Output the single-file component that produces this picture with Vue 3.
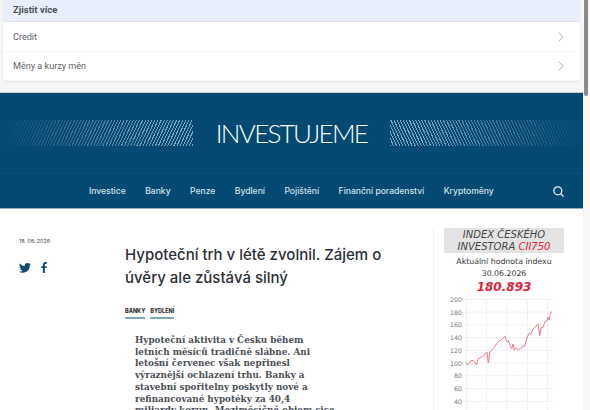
<template>
  <div class="page">
    <div class="scrollbar"><div class="thumb"></div></div>

    <section class="learn">
      <div class="card">
        <div class="card-head">Zjistit více</div>
        <a v-for="item in links" :key="item" class="card-row">
          <span>{{ item }}</span>
          <svg width="6" height="10" viewBox="0 0 6 10"><path d="M.7.7L5.200 5 .7 9.300" fill="none" stroke="#b0b4b9" stroke-width="1" /></svg>
        </a>
      </div>
    </section>

    <header class="masthead">
      <div class="brand">
        <div class="stripes stripes-left"></div>
        <div class="logo">INVESTUJEME</div>
        <div class="stripes stripes-right"></div>
      </div>
      <nav class="nav">
        <a v-for="nav in navigation" :key="nav" class="nav-item">{{ nav }}</a>
        <svg class="search" width="11" height="11" viewBox="0 0 11 11">
          <circle cx="4.800" cy="4.800" r="4" fill="none" stroke="#e4edf3" stroke-width="1.300" />
          <path d="M7.800 7.800l2.700 2.700" stroke="#e4edf3" stroke-width="1.300" />
        </svg>
      </nav>
    </header>

    <main class="content">
      <aside class="meta">
        <div class="date">18. 08. 2026</div>
        <div class="share">
          <svg width="12" height="10" viewBox="0 0 24 20"><path fill="#0d4a74" d="M24 2.400a9.800 9.800 0 0 1-2.800.8A4.900 4.900 0 0 0 23.300.5a9.800 9.800 0 0 1-3.100 1.200 4.900 4.900 0 0 0-8.400 4.500A13.900 13.900 0 0 1 1.700.9a4.900 4.900 0 0 0 1.500 6.600 4.900 4.900 0 0 1-2.200-.6v.1a4.900 4.900 0 0 0 3.900 4.800 4.900 4.900 0 0 1-2.200.1 4.900 4.900 0 0 0 4.600 3.400A9.900 9.900 0 0 1 0 17.300 13.900 13.900 0 0 0 7.500 19.500c9.100 0 14-7.500 14-14v-.6A10 10 0 0 0 24 2.400z" /></svg>
          <svg width="6" height="11" viewBox="0 0 10 20"><path fill="#0d4a74" d="M6.500 20v-9h3l.5-3.500H6.500V5.200c0-1 .3-1.700 1.700-1.700H10V.3C9.700.2 8.600 0 7.400 0 4.800 0 3 1.600 3 4.600v2.900H0V11h3v9z" /></svg>
        </div>
      </aside>

      <article class="article">
        <h1 class="title">Hypoteční trh v létě zvolnil. Zájem o úvěry ale zůstává silný</h1>
        <div class="tags">
          <span class="tag">BANKY</span>
          <span class="tag">BYDLENÍ</span>
        </div>
        <p class="perex">
          <span v-for="row in perex" :key="row" class="perex-line">{{ row }}</span>
        </p>
      </article>

      <aside class="index">
        <div class="index-head">INDEX ČESKÉHO<br />INVESTORA <span class="red">CII750</span></div>
        <div class="index-label first">Aktuální hodnota indexu</div>
        <div class="index-label">30.06.2026</div>
        <div class="index-value">180.893</div>
        <svg class="chart" width="114" height="116" viewBox="0 0 114 116">
          <g stroke="#f2f2f2" stroke-width="1">
            <line v-for="y in gridY" :key="y" x1="20" x2="109" :y1="y" :y2="y" />
            <line v-for="x in gridX" :key="x" :x1="x" :x2="x" y1="5" y2="116" />
          </g>
          <text v-for="tick in ticks" :key="tick.label" x="18" :y="tick.y + 2.500" text-anchor="end" class="tick">{{ tick.label }}</text>
          <polyline :points="line" fill="none" stroke="#ee7a87" stroke-width="1" />
        </svg>
      </aside>
    </main>
  </div>
</template>

<script setup>
const links = ["Credit", "Měny a kurzy měn"];
const navigation = ["Investice", "Banky", "Penze", "Bydlení", "Pojištění", "Finanční poradenství", "Kryptoměny"];

const perex = [
  "Hypoteční aktivita v Česku během",
  "letních měsíců tradičně slábne. Ani",
  "letošní červenec však nepřinesl",
  "výraznější ochlazení trhu. Banky a",
  "stavební spořitelny poskytly nové a",
  "refinancované hypotéky za 40,4",
  "miliardy korun. Meziměsíčně objem sice"
];

const toY = (value) => 5.3 + ((200 - value) / 20) * 12.75;

const ticks = [200, 180, 160, 140, 120, 100, 80, 60, 40].map((value) => ({
  label: String(value),
  y: toY(value)
}));
const gridY = ticks.map((t) => t.y);
const gridX = [22.5, 42.5, 63, 83.5, 103.5];

// hodnoty odečtené z grafu: [x, hodnota]
const series = [
  [22, 101], [23.500, 97], [25, 99], [27, 104], [29.500, 104], [31.200, 100], [32.500, 97], [34, 106],
  [37, 109], [40, 113], [43, 117], [44.300, 100], [45.700, 116], [47.500, 120], [50, 124], [53, 131],
  [55.300, 135], [58.700, 138], [61, 142], [63, 133], [64.300, 135], [66, 128], [67.700, 122], [69, 130],
  [70.300, 120], [72, 124], [74.300, 121], [76.300, 122], [78.700, 127], [80.700, 126], [82.700, 138],
  [84.700, 146], [87, 146], [88.700, 152], [90.300, 155], [92, 158], [94.300, 161], [95.700, 143], [97, 155],
  [99, 156], [101, 165], [102.700, 166], [104.300, 172], [105, 167], [106.300, 176], [107.700, 181]
];
const line = series.map(([x, v]) => `${x},${toY(v).toFixed(1)}`).join(" ");
</script>

<style scoped>
.page {
  position: relative;
  width: 590px;
  height: 410px;
  overflow: hidden;
  background: #fff;
}

.scrollbar {
  position: absolute;
  top: 0;
  right: 0;
  bottom: 0;
  width: 7px;
  background: #f8f8f8;
}

.thumb {
  width: 4px;
  height: 96px;
  margin-left: 1px;
  border-radius: 0 0 3px 3px;
  background: #8c8c8c;
}

.learn {
  width: 583px;
  height: 93px;
  box-sizing: border-box;
  padding: 0 3px;
  background: #f6f6f6;
  border-bottom: 1px solid #c9ced3;
}

.card {
  width: 577px;
  border-radius: 0 0 3px 3px;
  background: #fff;
  box-shadow: 0 1px 2px rgba(0, 0, 0, 0.08);
  font-family: Roboto, "Liberation Sans", sans-serif;
  font-size: 9.100px;
  color: #5f6368;
}

.card-head {
  height: 22px;
  line-height: 20px;
  box-sizing: border-box;
  padding-left: 10px;
  background: #e8eefb;
  border-bottom: 1px solid #dfe5ef;
  font-size: 9.500px;
  font-weight: 700;
  color: #4d5156;
}

.card-row {
  display: flex;
  align-items: center;
  justify-content: space-between;
  height: 29.500px;
  box-sizing: border-box;
  padding: 1px 16px 0 10px;
  border-bottom: 1px solid #f5f5f5;
}

.masthead {
  width: 583px;
  height: 115px;
  background: #034a72;
}

.brand {
  display: flex;
  align-items: center;
  justify-content: space-between;
  height: 81px;
  border-bottom: 1px solid #0b5078;
  box-sizing: border-box;
}

.logo {
  font-family: Lato, "Liberation Sans", sans-serif;
  font-size: 26px;
  font-weight: 300;
  letter-spacing: -1.700px;
  color: #fff;
}

.stripes {
  width: 193px;
  height: 26px;
}

.stripes-left {
  background: repeating-linear-gradient(115deg, #7ba6c0 0 1px, transparent 1px 2.800px);
  -webkit-mask-image: linear-gradient(to right, transparent, #000 85%);
  mask-image: linear-gradient(to right, transparent, #000 85%);
}

.stripes-right {
  background: repeating-linear-gradient(65deg, #7ba6c0 0 1px, transparent 1px 2.800px);
  -webkit-mask-image: linear-gradient(to left, transparent, #000 85%);
  mask-image: linear-gradient(to left, transparent, #000 85%);
}

.nav {
  position: relative;
  display: flex;
  align-items: center;
  gap: 19.500px;
  height: 34px;
  padding-left: 89px;
}

.nav-item {
  font-family: Inter, "Liberation Sans", sans-serif;
  font-size: 8.550px;
  font-weight: 500;
  color: #d3e1ea;
  white-space: nowrap;
}

.search {
  position: absolute;
  right: 19px;
  top: 12px;
}

.content {
  display: flex;
  width: 583px;
  border-top: 1px solid #8fb0c6;
  box-sizing: border-box;
}

.meta {
  width: 125px;
  flex: none;
  padding: 29px 0 0 19px;
  box-sizing: border-box;
}

.date {
  font-family: Inter, "Liberation Sans", sans-serif;
  font-size: 5.300px;
  color: #444;
}

.share {
  display: flex;
  align-items: center;
  gap: 10px;
  margin-top: 18px;
}

.article {
  width: 265px;
  flex: none;
}

.title {
  margin: 34px 0 0;
  font-family: Inter, "Liberation Sans", sans-serif;
  font-size: 15px;
  line-height: 23px;
  font-weight: 500;
  color: #2b3036;
}

.tags {
  display: flex;
  gap: 5px;
  margin-top: 19px;
}

.tag {
  padding-bottom: 3px;
  border-bottom: 2px solid #7ea6be;
  font-family: Inter, "Liberation Sans", sans-serif;
  font-size: 5.500px;
  font-weight: 800;
  color: #333;
}

.perex {
  width: 210px;
  margin: 15px 0 0 10px;
  font-family: "DejaVu Serif Condensed", "DejaVu Serif", serif;
  font-size: 9.800px;
  line-height: 11.700px;
  font-weight: 700;
  color: #4a4f55;
}

.perex-line {
  display: block;
  white-space: nowrap;
}

.index {
  width: 135px;
  flex: none;
  margin: 19px 0 0 43px;
  padding-left: 10px;
  box-sizing: border-box;
  border-left: 1px solid #f3f3f3;
  font-family: "DejaVu Sans", "Liberation Sans", sans-serif;
  text-align: center;
  color: #333;
}

.index-head {
  width: 120px;
  padding-top: 1px;
  background: #e3e3e3;
  font-size: 10px;
  line-height: 12px;
  font-style: italic;
  color: #444;
}

.red {
  color: #e0233a;
}

.index-label {
  width: 120px;
  font-size: 7.800px;
  line-height: 12px;
}

.index-label.first {
  margin-top: 3px;
}

.index-value {
  width: 120px;
  font-size: 12px;
  line-height: 14px;
  font-weight: 700;
  font-style: italic;
  color: #e0233a;
}

.chart {
  display: block;
}

.tick {
  font-family: "DejaVu Sans", sans-serif;
  font-size: 6.300px;
  fill: #777;
}
</style>

<style>
body {
  margin: 0;
}
</style>
